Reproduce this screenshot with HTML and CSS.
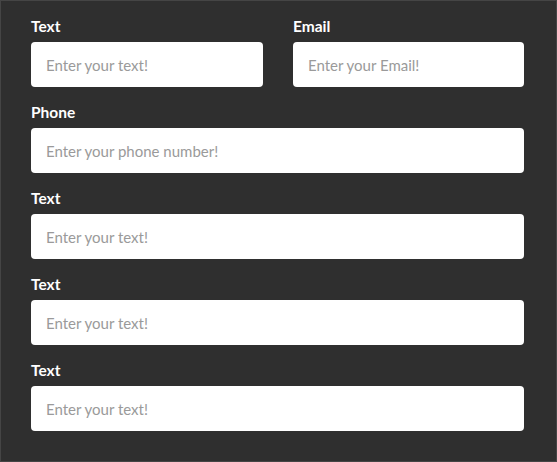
FILE: index.html
```html
<!DOCTYPE html>
<html>
<head>
<meta charset="utf-8">
<link rel="stylesheet" href="styles.css">
</head>
<body>
<form class="card">
  <div class="row">
    <div class="group">
      <label class="label">Text</label>
      <input class="field" type="text" placeholder="Enter your text!">
    </div>
    <div class="group">
      <label class="label">Email</label>
      <input class="field" type="text" placeholder="Enter your Email!">
    </div>
  </div>
  <div class="group">
    <label class="label">Phone</label>
    <input class="field" type="text" placeholder="Enter your phone number!">
  </div>
  <div class="group">
    <label class="label">Text</label>
    <input class="field" type="text" placeholder="Enter your text!">
  </div>
  <div class="group">
    <label class="label">Text</label>
    <input class="field" type="text" placeholder="Enter your text!">
  </div>
  <div class="group">
    <label class="label">Text</label>
    <input class="field" type="text" placeholder="Enter your text!">
  </div>
</form>
</body>
</html>
```
FILE: styles.css
```css
html, body {
  margin: 0;
  padding: 0;
  background: #2f2f2f;
}
.card {
  box-sizing: border-box;
  width: 557px;
  height: 462px;
  margin: 0;
  padding: 15px 32px 15px 30px;
  background: #2f2f2f;
  border: 1px solid #454545;
  font-family: Lato, "Liberation Sans", sans-serif;
}
.row {
  display: grid;
  grid-template-columns: 232px 231px;
  column-gap: 30px;
}
.group {
  display: flex;
  flex-direction: column;
  margin-bottom: 15px;
}
.label {
  color: #ffffff;
  font-weight: 700;
  font-size: 15.5px;
  line-height: 20px;
  margin-bottom: 6px;
}
.field {
  box-sizing: border-box;
  height: 45px;
  width: 100%;
  border: none;
  border-radius: 4px;
  background: #ffffff;
  padding: 0 15px;
  font-family: Lato, "Liberation Sans", sans-serif;
  font-size: 15px;
  color: #333;
  outline: none;
}
.field::placeholder {
  color: #9a9a9a;
  opacity: 1;
}
```
